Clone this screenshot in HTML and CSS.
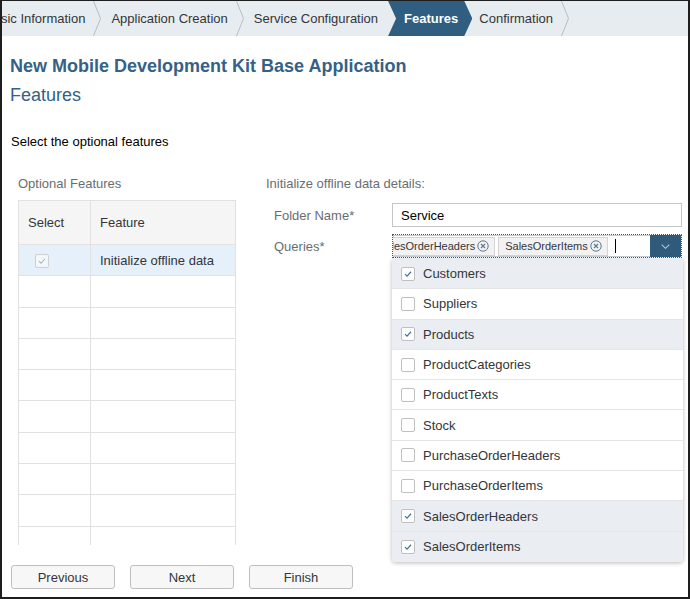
FILE: index.html
```html
<!DOCTYPE html>
<html lang="en">
<head>
<meta charset="utf-8">
<title>New Mobile Development Kit Base Application</title>
<link rel="stylesheet" href="styles.css">
</head>
<body>
<div class="frame">
  <nav class="steps">
    <ol class="steps-list">
      <li class="step">Basic Information</li>
      <li class="sep"><svg viewBox="0 0 8 35" width="8" height="35"><polyline points="0.5,0 7.5,17.5 0.5,35" fill="none" stroke="#b6bec6" stroke-width="1"/></svg></li>
      <li class="step">Application Creation</li>
      <li class="sep"><svg viewBox="0 0 8 35" width="8" height="35"><polyline points="0.5,0 7.5,17.5 0.5,35" fill="none" stroke="#b6bec6" stroke-width="1"/></svg></li>
      <li class="step step-before-active">Service Configuration</li>
      <li class="step active">Features</li>
      <li class="step step-after-active">Confirmation</li>
      <li class="sep"><svg viewBox="0 0 8 35" width="8" height="35"><polyline points="0.5,0 7.5,17.5 0.5,35" fill="none" stroke="#b6bec6" stroke-width="1"/></svg></li>
    </ol>
  </nav>

  <main class="content">
    <h1 class="title">New Mobile Development Kit Base Application</h1>
    <h2 class="subtitle">Features</h2>
    <p class="intro">Select the optional features</p>

    <div class="columns">
      <section class="left">
        <div class="section-label">Optional Features</div>
        <div class="table-wrap">
          <table class="feat-table">
            <thead>
              <tr><th class="col-select">Select</th><th>Feature</th></tr>
            </thead>
            <tbody>
              <tr class="row-selected">
                <td class="col-select"><span class="cb cb-disabled"><svg viewBox="0 0 14 14" width="12" height="12"><path d="M3.5 7.2 L5.9 9.6 L10.5 4.4" fill="none" stroke="#9db8d1" stroke-width="1.2"/></svg></span></td>
                <td>Initialize offline data</td>
              </tr>
              <tr><td class="col-select"></td><td></td></tr>
              <tr><td class="col-select"></td><td></td></tr>
              <tr><td class="col-select"></td><td></td></tr>
              <tr><td class="col-select"></td><td></td></tr>
              <tr><td class="col-select"></td><td></td></tr>
              <tr><td class="col-select"></td><td></td></tr>
              <tr><td class="col-select"></td><td></td></tr>
              <tr><td class="col-select"></td><td></td></tr>
              <tr><td class="col-select"></td><td></td></tr>
            </tbody>
          </table>
        </div>
      </section>

      <section class="right">
        <div class="section-label">Initialize offline data details:</div>
        <div class="form-row">
          <label class="form-label">Folder Name*</label>
          <div class="input">Service</div>
        </div>
        <div class="form-row form-row-queries">
          <label class="form-label">Queries*</label>
          <div class="field-wrap">
            <div class="multi">
              <div class="tokens">
                <div class="tokens-track">
                  <span class="token">SalesOrderHeaders<svg class="token-x" viewBox="0 0 12 12" width="12" height="12"><circle cx="6" cy="6" r="5.2" fill="none" stroke="#5f7790" stroke-width="1"/><path d="M4 4 L8 8 M8 4 L4 8" stroke="#5f7790" stroke-width="1.1"/></svg></span>
                  <span class="token">SalesOrderItems<svg class="token-x" viewBox="0 0 12 12" width="12" height="12"><circle cx="6" cy="6" r="5.2" fill="none" stroke="#5f7790" stroke-width="1"/><path d="M4 4 L8 8 M8 4 L4 8" stroke="#5f7790" stroke-width="1.1"/></svg></span>
                  <span class="caret"></span>
                </div>
              </div>
              <div class="multi-btn"><svg viewBox="0 0 9 5" width="9" height="5"><polyline points="0.7,0.7 4.5,4.3 8.3,0.7" fill="none" stroke="#b7c5d2" stroke-width="1.1"/></svg></div>
            </div>
            <ul class="dropdown">
              <li class="option selected"><span class="cb"><svg viewBox="0 0 14 14" width="12" height="12"><path d="M3.5 7.2 L5.9 9.6 L10.5 4.4" fill="none" stroke="#3d74a3" stroke-width="1.4"/></svg></span>Customers</li>
              <li class="option"><span class="cb"></span>Suppliers</li>
              <li class="option selected"><span class="cb"><svg viewBox="0 0 14 14" width="12" height="12"><path d="M3.5 7.2 L5.9 9.6 L10.5 4.4" fill="none" stroke="#3d74a3" stroke-width="1.4"/></svg></span>Products</li>
              <li class="option"><span class="cb"></span>ProductCategories</li>
              <li class="option"><span class="cb"></span>ProductTexts</li>
              <li class="option"><span class="cb"></span>Stock</li>
              <li class="option"><span class="cb"></span>PurchaseOrderHeaders</li>
              <li class="option"><span class="cb"></span>PurchaseOrderItems</li>
              <li class="option selected"><span class="cb"><svg viewBox="0 0 14 14" width="12" height="12"><path d="M3.5 7.2 L5.9 9.6 L10.5 4.4" fill="none" stroke="#3d74a3" stroke-width="1.4"/></svg></span>SalesOrderHeaders</li>
              <li class="option selected"><span class="cb"><svg viewBox="0 0 14 14" width="12" height="12"><path d="M3.5 7.2 L5.9 9.6 L10.5 4.4" fill="none" stroke="#3d74a3" stroke-width="1.4"/></svg></span>SalesOrderItems</li>
            </ul>
          </div>
        </div>
      </section>
    </div>

    <footer class="buttons">
      <button class="btn" type="button">Previous</button>
      <button class="btn" type="button">Next</button>
      <button class="btn" type="button">Finish</button>
    </footer>
  </main>
</div>
</body>
</html>
```

FILE: styles.css
```css
* { box-sizing: border-box; }

html, body {
  margin: 0;
  padding: 0;
  background: #ffffff;
}

body {
  font-family: "Liberation Sans", Arial, sans-serif;
  font-size: 13px;
  color: #32363a;
}

.frame {
  width: 690px;
  height: 599px;
  border-style: solid;
  border-color: #1e1e1e;
  border-width: 1px 2px 2px 2px;
  overflow: hidden;
  display: flex;
  flex-direction: column;
}

/* ---------- wizard steps ---------- */
.steps {
  flex: none;
  height: 35px;
  background: #e7ecf0;
  overflow: hidden;
}

.steps-list {
  display: flex;
  align-items: stretch;
  height: 100%;
  margin: 0 0 0 -27px;
  padding: 0;
  list-style: none;
}

.step {
  display: flex;
  align-items: center;
  flex: none;
  padding: 0 8px 0 10px;
  white-space: nowrap;
  color: #32363a;
}

.step-before-active { padding-right: 10px; }
.step-after-active { padding-left: 7px; }

.sep {
  display: flex;
  flex: none;
  width: 8px;
}

.sep svg { display: block; }

.step.active {
  background: #2f5e81;
  color: #ffffff;
  font-weight: bold;
  padding: 0 14px 0 16px;
  clip-path: polygon(0 0, calc(100% - 8px) 0, 100% 50%, calc(100% - 8px) 100%, 0 100%, 8px 50%);
}

/* ---------- content ---------- */
.content {
  flex: 1;
  display: flex;
  flex-direction: column;
  padding: 0 5px 0 8px;
}

.title {
  margin: 19px 0 0;
  font-size: 18px;
  line-height: 22px;
  font-weight: bold;
  color: #346187;
}

.subtitle {
  margin: 7px 0 0;
  font-size: 18px;
  line-height: 22px;
  font-weight: normal;
  color: #346187;
}

.intro {
  margin: 28px 0 0 1px;
  line-height: 16px;
  color: #000000;
}

.columns {
  display: grid;
  grid-template-columns: 218px 1fr;
  column-gap: 30px;
  margin-top: 26px;
  padding-left: 8px;
}

.section-label {
  line-height: 16px;
  color: #6a6d70;
}

/* ---------- table ---------- */
.table-wrap {
  margin-top: 8px;
  height: 345px;
  overflow: hidden;
}

.feat-table {
  width: 218px;
  border-collapse: collapse;
  table-layout: fixed;
}

.feat-table th,
.feat-table td {
  border: 1px solid #e1e1e1;
  padding: 0 9px;
  text-align: left;
  font-weight: normal;
  color: #32363a;
}

.feat-table th {
  height: 44px;
  background: #f5f5f5;
}

.feat-table td { height: 31.3px; }

.feat-table .col-select { width: 72px; }

.feat-table td.col-select { padding-left: 16px; }

.row-selected td { background: #e5f0fa; }

/* ---------- checkboxes ---------- */
.cb {
  display: inline-flex;
  align-items: center;
  justify-content: center;
  width: 14px;
  height: 14px;
  border: 1px solid #bfbfbf;
  border-radius: 2px;
  background: #ffffff;
  flex: none;
  vertical-align: middle;
}

.cb-disabled {
  border-color: #cfcfcf;
  background: #f4f6f8;
}

/* ---------- form ---------- */
.form-row {
  display: flex;
  align-items: center;
  padding-left: 8px;
  margin-top: 11px;
}

.form-row-queries { margin-top: 7px; }

.form-label {
  width: 118px;
  flex: none;
  color: #6a6d70;
}

.input {
  width: 290px;
  height: 24px;
  border: 1px solid #c6c6c6;
  padding: 0 8px;
  display: flex;
  align-items: center;
  color: #000000;
}

.field-wrap {
  position: relative;
  width: 290px;
}

.multi {
  display: flex;
  height: 24px;
  border: 1px dotted #4b5560;
  box-shadow: inset 0 0 0 1px #c3ced8;
}

.tokens {
  flex: 1;
  overflow: hidden;
  display: flex;
  align-items: center;
}

.tokens-track {
  display: flex;
  align-items: center;
  gap: 3px;
  margin-left: -22px;
  white-space: nowrap;
}

.token {
  display: inline-flex;
  align-items: center;
  height: 19px;
  padding: 0 5px 0 6px;
  border: 1px solid #d4d4d4;
  background: #f2f2f2;
  font-size: 11px;
  color: #32363a;
  flex: none;
}

.token-x { margin-left: 2px; }

.caret {
  width: 1px;
  height: 14px;
  margin-left: 4px;
  background: #000000;
  flex: none;
}

.multi-btn {
  width: 31px;
  flex: none;
  background: #2f5a7b;
  display: flex;
  align-items: center;
  justify-content: center;
}

.multi-btn svg { display: block; }

/* ---------- dropdown popover ---------- */
.dropdown {
  position: absolute;
  left: 0;
  top: calc(100% + 1px);
  width: 291px;
  margin: 0;
  padding: 0;
  list-style: none;
  background: #ffffff;
  border-radius: 0 0 4px 4px;
  box-shadow: 0 1px 4px rgba(0, 0, 0, 0.28);
  overflow: hidden;
  z-index: 2;
}

.option {
  display: flex;
  align-items: center;
  gap: 8px;
  height: 30.3px;
  padding-left: 9px;
  border-bottom: 1px solid #e5e5e5;
  color: #32363a;
}

.option:last-child { border-bottom: none; }

.option.selected { background: #eaeef2; }

/* ---------- buttons ---------- */
.buttons {
  display: flex;
  gap: 15px;
  margin-top: 20px;
  padding-left: 1px;
}

.btn {
  width: 104px;
  height: 24px;
  border: 1px solid #bfbfbf;
  border-radius: 3px;
  background: #f7f7f7;
  font-family: "Liberation Sans", Arial, sans-serif;
  font-size: 13px;
  color: #32363a;
  padding: 0;
}
```
